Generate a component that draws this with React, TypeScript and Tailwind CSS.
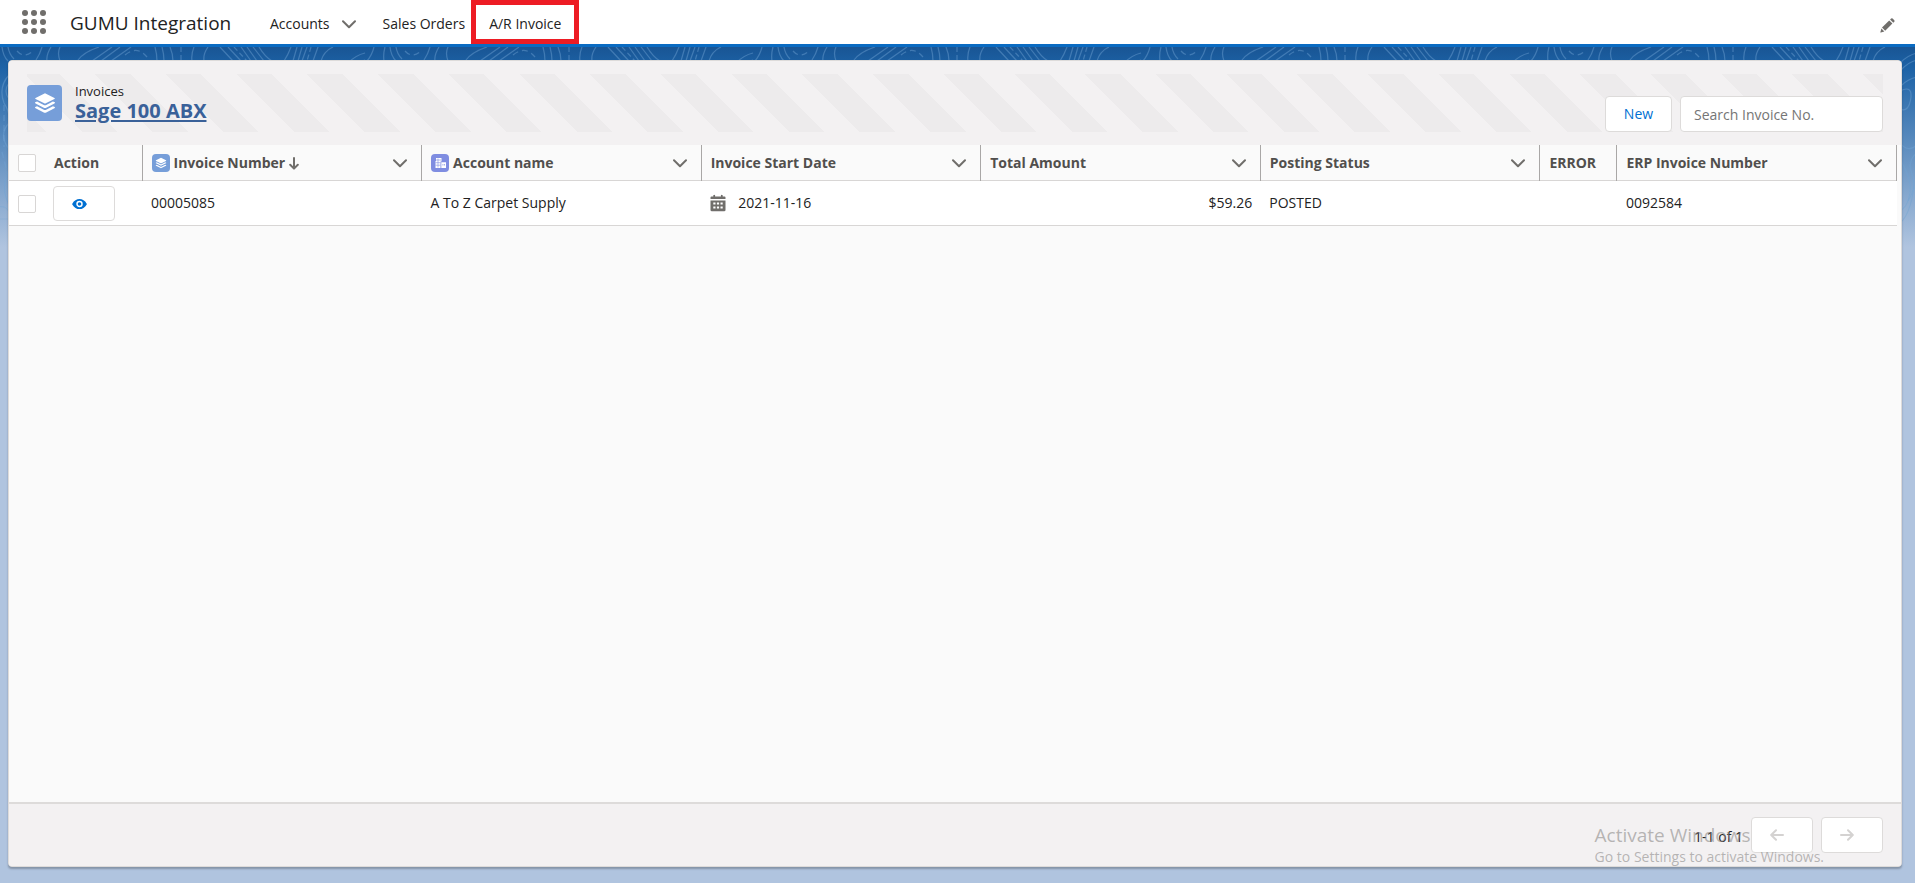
import { useState } from "react";
import type { ReactNode } from "react";

interface Invoice {
  id: string;
  number: string;
  account: string;
  startDate: string;
  total: string;
  status: string;
  error: string;
  erpNumber: string;
}

const invoices: Invoice[] = [
  {
    id: "inv-1",
    number: "00005085",
    account: "A To Z Carpet Supply",
    startDate: "2021-11-16",
    total: "$59.26",
    status: "POSTED",
    error: "",
    erpNumber: "0092584",
  },
];

function ChevronIcon() {
  return (
    <svg width="14" height="9" viewBox="0 0 14 9" fill="none" stroke="#706e6b" strokeWidth="2" aria-hidden="true">
      <path d="M1 1.2 L7 7.2 L13 1.2" strokeLinecap="round" strokeLinejoin="round" />
    </svg>
  );
}

function LayersIcon({ size }: { size: number }) {
  return (
    <svg width={size} height={size} viewBox="0 0 36 36" fill="#fff" aria-hidden="true">
      <path d="M18 7.6 L28 12.6 Q29 13.2 28 13.8 L18.8 18.3 Q18 18.7 17.2 18.3 L8 13.8 Q7 13.2 8 12.6 Z" />
      <path d="M7.6 17.3 L9.6 16.5 L17.2 20.3 Q18 20.7 18.8 20.3 L26.4 16.5 L28.4 17.3 Q29 17.9 28 18.5 L18.8 23.2 Q18 23.6 17.2 23.2 L8 18.5 Q7 17.9 7.6 17.3 Z" />
      <path d="M7.6 22.3 L9.6 21.5 L17.2 25.3 Q18 25.7 18.8 25.3 L26.4 21.5 L28.4 22.3 Q29 22.9 28 23.5 L18.8 28.2 Q18 28.6 17.2 28.2 L8 23.5 Q7 22.9 7.6 22.3 Z" />
    </svg>
  );
}

function AccountIcon() {
  return (
    <svg width="17" height="18" viewBox="0 0 17 18" aria-hidden="true">
      <path d="M4 4 H9.5 V7.5 H8.5 V14 H3.5 V7 H4 Z" fill="#fff" />
      <path d="M9.3 8.3 H14 V14 H9.3 Z" fill="#fff" />
      <path d="M4 6 H9 M3.5 8.7 H8.3 M3.5 11.2 H8.3 M6 4.5 V13.5" stroke="#7f8de1" strokeWidth="0.6" />
      <path d="M10.6 10 H11.3 V11.5 H10.6 Z M12.2 10 H12.9 V11.5 H12.2 Z" fill="#7f8de1" />
    </svg>
  );
}

function SortArrowIcon() {
  return (
    <svg width="10" height="13" viewBox="0 0 10 13" fill="none" stroke="#706e6b" strokeWidth="2" aria-hidden="true">
      <path d="M5 1 V11 M1.2 7.8 L5 11.6 L8.8 7.8" strokeLinecap="round" strokeLinejoin="round" />
    </svg>
  );
}

function EyeIcon() {
  return (
    <svg width="15" height="12" viewBox="0 0 16 12" aria-hidden="true">
      <path d="M0.3 6.4 Q0 6 0.3 5.6 C2.2 2.2 5 0.6 8 0.6 C11 0.6 13.8 2.2 15.7 5.6 Q16 6 15.7 6.4 C13.8 9.8 11 11.4 8 11.4 C5 11.4 2.2 9.8 0.3 6.4 Z" fill="#0070d2" />
      <circle cx="8" cy="6" r="2.7" fill="none" stroke="#fff" strokeWidth="1.5" />
    </svg>
  );
}

function CalendarIcon() {
  return (
    <svg width="16" height="18" viewBox="0 0 16 18" aria-hidden="true">
      <path d="M1.5 2.5 H3.3 V1.3 Q4.2 0 5.1 1.3 V2.5 H10.9 V1.3 Q11.8 0 12.7 1.3 V2.5 H14.5 Q15.5 2.5 15.5 3.5 V5 H0.5 V3.5 Q0.5 2.5 1.5 2.5 Z" fill="#706e6b" />
      <path d="M0.5 6.5 H15.5 V16 Q15.5 17.3 14.2 17.3 H1.8 Q0.5 17.3 0.5 16 Z" fill="#706e6b" />
      <path d="M3.3 8.6 H5.5 V10.6 H3.3 Z M6.9 8.6 H9.1 V10.6 H6.9 Z M10.5 8.6 H12.7 V10.6 H10.5 Z M3.3 12.4 H5.5 V14.4 H3.3 Z M6.9 12.4 H9.1 V14.4 H6.9 Z M10.5 12.4 H12.7 V14.4 H10.5 Z" fill="#fff" />
    </svg>
  );
}

function PencilIcon() {
  return (
    <svg width="15" height="15" viewBox="0 0 15 15" fill="#706e6b" aria-hidden="true">
      <path d="M2 9.6 L9.2 2.4 L12.4 5.6 L5.2 12.8 Z" />
      <path d="M10.1 1.6 L11.2 0.5 Q11.9 0 12.6 0.6 L14.3 2.3 Q14.9 3 14.3 3.7 L13.3 4.7 Z" />
      <path d="M1.4 10.5 L4.3 13.4 L0.9 14.4 Q0.2 14.6 0.4 13.9 Z" />
    </svg>
  );
}

function PageArrow({ flip }: { flip?: boolean }) {
  return (
    <svg
      width="14"
      height="12"
      viewBox="0 0 14 12"
      fill="none"
      stroke="#d4d2d1"
      strokeWidth="2"
      className={flip ? "rotate-180" : ""}
      aria-hidden="true"
    >
      <path d="M13 6 H1.5 M6 1.2 L1.2 6 L6 10.8" strokeLinecap="round" strokeLinejoin="round" />
    </svg>
  );
}

// Contour lines that show in the gap around the panel
function Backdrop() {
  return (
    <svg className="absolute inset-x-0 top-0 h-[210px] w-full" aria-hidden="true">
      <defs>
        <pattern id="contours" width="388" height="210" patternUnits="userSpaceOnUse">
          <g fill="none" stroke="#6fa3d3" strokeOpacity="0.45" strokeWidth="1.2">
            <path d="M2 0 Q3 9 8 14 M8 0 Q9 7 14 12 M42 0 Q40 7 36 13 M51 0 Q46 8 47 14 M60 0 Q57 6 60 14" />
            <path d="M17 4 Q24 12 33 4 M125 8 Q137 -2 147 10" strokeDasharray="6 4" />
            <path d="M99 0 Q84 5 78 13 M112 0 L92 14 M120 0 L101 14 M131 0 L111 14" />
            <path d="M155 0 Q157 7 157 14 M162 0 Q164 7 164 14 M170 0 Q173 7 173 14 M194 0 Q191 7 192 14 M208 0 Q203 7 204 14" />
            <path d="M181 0 V14" strokeDasharray="5 3" />
            <path d="M220 0 L233 14 M228 0 L241 14 M241 0 L251 14 M247 0 L257 14 M253 0 L264 14 M259 0 Q265 10 272 14" />
            <path d="M234 0 L247 14 M311 0 L307 14" strokeDasharray="5 3" />
            <path d="M291 0 Q288 8 284 14 M297 0 L293 14 M302 0 L298 14 M307 0 L302 14 M318 0 L313 14 M333 0 Q324 4 321 14" />
            <path d="M374 0 Q372 8 367 14 M385 0 Q383 7 384 14" />
            {/* left edge */}
            <path d="M9 28 Q-2 40 4 56 Q9 64 9 70 M9 36 Q3 44 9 52 M9 76 Q-2 88 9 102 M9 124 Q0 140 9 158" />
            <path d="M4 58 V100 M2 105 L8 128" strokeDasharray="6 4" />
            <path d="M-2 160 Q6 158 9 165 M-2 172 H9" strokeOpacity="0.3" />
            {/* right edge */}
            <path d="M348 16 Q356 8 365 6 M348 24 Q356 15 365 13 M350 38 Q356 32 365 30" />
            <path d="M348 44 Q360 38 359 50 Q357 66 348 62 M348 96 Q356 106 365 98 M365 106 Q354 114 361 130 Q364 142 356 154" />
            <path d="M348 112 Q362 136 357 150 Q355 160 348 164 M348 176 Q358 168 362 140" strokeOpacity="0.4" />
          </g>
        </pattern>
      </defs>
      <rect width="100%" height="100%" fill="url(#contours)" />
    </svg>
  );
}

function HeaderCell({ label, icon, sorted, menu = true }: { label: string; icon?: ReactNode; sorted?: boolean; menu?: boolean }) {
  return (
    <th scope="col" className="border-r border-[#a9a7a6] pt-0.5 pr-2 pl-[9px] text-left font-bold">
      <div className="flex items-center">
        {icon}
        <span className="whitespace-nowrap">{label}</span>
        {sorted && (
          <span className="ml-1">
            <SortArrowIcon />
          </span>
        )}
        {menu && (
          <button type="button" aria-label={`${label} column actions`} className="ml-auto p-1.5">
            <ChevronIcon />
          </button>
        )}
      </div>
    </th>
  );
}

const checkboxClass =
  "block h-[18px] w-[18px] appearance-none rounded-xs border border-[#d8d6d5] bg-white checked:border-[#0070d2] checked:bg-[#0070d2]";

const cellClass = "pt-px pr-2 pl-[9px]";

export default function App() {
  const [selected, setSelected] = useState<string[]>([]);
  const [search, setSearch] = useState("");

  const allSelected = selected.length === invoices.length;

  function toggle(id: string) {
    setSelected(selected.includes(id) ? selected.filter((s) => s !== id) : [...selected, id]);
  }

  const rows = invoices.filter((inv) => inv.number.includes(search));

  return (
    <div className="flex min-h-screen flex-col font-['Open_Sans','Noto_Sans',sans-serif] text-sm text-[#222]">
      {/* App bar */}
      <header className="flex h-[47px] items-stretch border-b-3 border-[#0a6bc2] bg-white">
        <button type="button" aria-label="App Launcher" className="ml-[22px] flex items-center">
          <svg width="24" height="24" viewBox="0 0 24 24" fill="#706e6b" aria-hidden="true">
            {[3, 12, 21].map((cy) => [3, 12, 21].map((cx) => <circle key={`${cx}-${cy}`} cx={cx} cy={cy} r="3" />))}
          </svg>
        </button>
        <span className="ml-6 w-[180px] self-center pt-1 text-[19px] whitespace-nowrap">GUMU Integration</span>
        <nav className="flex items-stretch">
          <div className="flex items-center pt-1 pl-5">
            <a href="#accounts">Accounts</a>
            <button type="button" aria-label="Accounts menu" className="ml-1.5 p-1.5">
              <ChevronIcon />
            </button>
          </div>
          <a href="#orders" className="flex items-center pt-1 pr-1.5 pl-[21px]">Sales Orders</a>
          <a href="#invoices" className="flex items-center border-5 border-[#ed1c24] px-[13px] pt-1">A/R Invoice</a>
        </nav>
        <button type="button" aria-label="Edit" className="mr-5 ml-auto pt-1.5">
          <PencilIcon />
        </button>
      </header>

      <div className="relative flex flex-1 flex-col bg-[#b0c4df] bg-[linear-gradient(to_bottom,#195594_0px,#1c62a6_20px,#b0c4df_200px)] pt-[13px] pr-[13px] pb-4 pl-2">
        <Backdrop />

        <main className="relative flex flex-1 flex-col overflow-hidden rounded-sm border border-[#dddbda] bg-[#fafafa] shadow-[0_2px_2px_rgba(0,0,0,0.25)]">
          {/* Page header */}
          <div className="bg-[#f3f1f2] px-[18px] py-[13px]">
            <div className="flex h-[58px] items-center bg-[repeating-linear-gradient(45deg,#edebec_0px,#edebec_14px,#f3f1f2_14px,#f3f1f2_39px,#edebec_39px,#edebec_50px)]">
              <span className="flex h-9 w-[35px] items-center justify-center rounded-sm bg-[#769ed9]">
                <LayersIcon size={34} />
              </span>
              <div className="ml-[13px]">
                <p className="text-[13px] leading-4">Invoices</p>
                <h1 className="text-xl leading-6 font-bold text-[#3a6199] underline underline-offset-2">Sage 100 ABX</h1>
              </div>
              <div className="ml-auto flex items-center gap-2 self-end">
                <button type="button" className="h-9 w-[67px] rounded-sm border border-[#dddbda] bg-white text-[#0070d2]">
                  New
                </button>
                <input
                  type="search"
                  aria-label="Search Invoice No."
                  placeholder="Search Invoice No."
                  value={search}
                  onChange={(e) => setSearch(e.target.value)}
                  className="h-9 w-[203px] rounded-sm border border-[#dddbda] bg-white px-[13px] placeholder:text-[#757575]"
                />
              </div>
            </div>
          </div>

          {/* Invoice list */}
          <div className="flex-1 pr-1">
            <table className="w-full table-fixed border-collapse">
              <colgroup>
                <col className="w-9" />
                <col className="w-[97px]" />
                <col />
                <col />
                <col />
                <col />
                <col />
                <col className="w-[77px]" />
                <col />
              </colgroup>
              <thead>
                <tr className="h-[35px] border-b border-[#d8d6d5] text-[#514f4d]">
                  <th scope="col" className="pt-0.5 pl-[9px]">
                    <input
                      type="checkbox"
                      aria-label="Select all"
                      checked={allSelected}
                      onChange={() => setSelected(allSelected ? [] : invoices.map((inv) => inv.id))}
                      className={checkboxClass}
                    />
                  </th>
                  <HeaderCell label="Action" menu={false} />
                  <HeaderCell
                    label="Invoice Number"
                    sorted
                    icon={
                      <span className="mr-1 flex h-[18px] w-[18px] items-center justify-center rounded-sm bg-[#769ed9]">
                        <LayersIcon size={18} />
                      </span>
                    }
                  />
                  <HeaderCell
                    label="Account name"
                    icon={
                      <span className="mr-1 flex h-[18px] w-[18px] items-center justify-center rounded-sm bg-[#7f8de1]">
                        <AccountIcon />
                      </span>
                    }
                  />
                  <HeaderCell label="Invoice Start Date" />
                  <HeaderCell label="Total Amount" />
                  <HeaderCell label="Posting Status" />
                  <HeaderCell label="ERROR" menu={false} />
                  <HeaderCell label="ERP Invoice Number" />
                </tr>
              </thead>
              <tbody>
                {rows.map((inv) => (
                  <tr key={inv.id} className="h-[45px] border-b border-[#d8d6d5] bg-white">
                    <td className="pt-0.5 pl-[9px]">
                      <input
                        type="checkbox"
                        aria-label={`Select invoice ${inv.number}`}
                        checked={selected.includes(inv.id)}
                        onChange={() => toggle(inv.id)}
                        className={checkboxClass}
                      />
                    </td>
                    <td className="pt-px pl-2">
                      <button
                        type="button"
                        aria-label="View invoice"
                        className="flex h-[35px] w-[62px] items-center rounded-sm border border-[#dddbda] bg-white pt-0.5 pl-[18px]"
                      >
                        <EyeIcon />
                      </button>
                    </td>
                    <td className={cellClass}>{inv.number}</td>
                    <td className={cellClass}>{inv.account}</td>
                    <td className={cellClass}>
                      <div className="flex items-center gap-3">
                        <CalendarIcon />
                        {inv.startDate}
                      </div>
                    </td>
                    <td className={`${cellClass} text-right`}>{inv.total}</td>
                    <td className={cellClass}>{inv.status}</td>
                    <td className={cellClass}>{inv.error}</td>
                    <td className={cellClass}>{inv.erpNumber}</td>
                  </tr>
                ))}
              </tbody>
            </table>
          </div>

          {/* Pagination */}
          <footer className="flex h-16 items-center justify-end border-t-2 border-[#dddbda] bg-[#f3f1f2] pr-[18px]">
            <span className="mr-2 pt-1">1-1 of 1</span>
            <div className="flex gap-2">
              <button type="button" disabled aria-label="Previous page" className="flex h-9 w-[62px] items-center rounded-sm border border-[#dddbda] bg-white pl-[18px]">
                <PageArrow />
              </button>
              <button type="button" disabled aria-label="Next page" className="flex h-9 w-[62px] items-center rounded-sm border border-[#dddbda] bg-white pl-[18px]">
                <PageArrow flip />
              </button>
            </div>
          </footer>
        </main>

        {/* Desktop watermark */}
        <div className="pointer-events-none absolute right-[91px] bottom-4 text-[#8c8a89]/60">
          <p className="text-[19px] leading-6">Activate Windows</p>
          <p className="text-sm leading-5">Go to Settings to activate Windows.</p>
        </div>
      </div>
    </div>
  );
}
